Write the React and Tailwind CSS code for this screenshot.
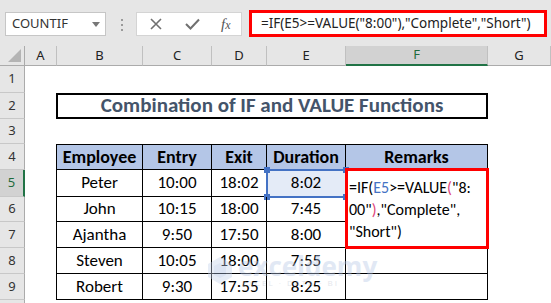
import React from 'react';

const cal = { fontFamily: 'Carlito, Lato, "Liberation Sans", sans-serif' };
const ui = { fontFamily: '"Noto Sans", "Open Sans", sans-serif' };

const cols = ['A', 'B', 'C', 'D', 'E', 'F', 'G'];
const rows = [
  ['Peter', '10:00', '18:02', '8:02'],
  ['John', '10:15', '18:00', '7:45'],
  ['Ajantha', '9:50', '17:50', '8:00'],
  ['Steven', '10:05', '18:00', '7:55'],
  ['Robert', '9:30', '17:55', '8:25'],
];
const rowHeights = ['h-[27px]', 'h-[26px]', 'h-[25px]', 'h-[26px]', 'h-[27px]', 'h-[25px]', 'h-[26px]', 'h-[26px]', 'h-[26px]', 'h-[26px]'];

function Toolbar() {
  return (
    <div className="h-[46px] bg-[#e6e6e6] flex items-start" style={ui}>
      <div className="ml-[5px] mt-[12px] w-[101px] h-[24px] bg-white border border-[#c6c6c6] flex items-center pl-[6px] pr-[5px]">
        <span className="text-[13px] text-[#333] flex-1">COUNTIF</span>
        <span className="w-0 h-0 border-l-[4px] border-r-[4px] border-t-[5px] border-l-transparent border-r-transparent border-t-[#777]" />
      </div>
      <div className="ml-[15px] mt-[19px] flex flex-col gap-[3px]">
        <span className="w-[2px] h-[2px] bg-[#9a9a9a]" />
        <span className="w-[2px] h-[2px] bg-[#9a9a9a]" />
        <span className="w-[2px] h-[2px] bg-[#9a9a9a]" />
      </div>
      <div className="ml-[13px] mt-[12px] w-[106px] h-[24px] bg-white border border-[#d4d4d4] flex items-center">
        <svg width="12" height="12" viewBox="0 0 12 12" className="ml-[13px]">
          <path d="M1 1 L11 11 M11 1 L1 11" stroke="#707070" strokeWidth="1.6" fill="none" />
        </svg>
        <svg width="15" height="12" viewBox="0 0 15 12" className="ml-[23px]">
          <path d="M1 6 L5.5 10.5 L14 1.5" stroke="#707070" strokeWidth="2" fill="none" />
        </svg>
        <span className="ml-[21px] text-[15px] italic text-[#555]" style={{ fontFamily: '"Liberation Serif", serif' }}>
          f<span className="text-[12px]">x</span>
        </span>
      </div>
      <div className="ml-[7px] mt-[10px] w-[298px] h-[27px] bg-white border-[3px] border-[#ff0000] flex items-center pl-[9px]">
        <span className="text-[13.5px] text-[#222] whitespace-nowrap">=IF(E5&gt;=VALUE("8:00"),"Complete","Short")</span>
      </div>
    </div>
  );
}

function Sheet() {
  return (
    <div className="grid grid-cols-[25px_32px_86px_69px_55px_79px_142px_63px]">
      {/* column headers */}
      <div className="h-[20px] bg-[#e6e6e6] border-b border-[#ababab] border-r border-r-[#ababab] relative">
        <svg width="13" height="13" viewBox="0 0 13 13" className="absolute right-[3px] bottom-[3px]">
          <path d="M13 0 L13 13 L0 13 Z" fill="#b4b4b4" />
        </svg>
      </div>
      {cols.map((c) => (
        <div
          key={c}
          className={`h-[20px] flex items-center justify-center text-[13px] border-r border-[#c0c0c0] ${
            c === 'F' ? 'bg-[#d2d2d2] text-[#1e6b3c] border-b-2 border-b-[#217346]' : 'bg-[#e6e6e6] text-[#222] border-b border-b-[#ababab]'
          }`}
          style={ui}
        >
          {c}
        </div>
      ))}

      {rowHeights.map((h, i) => {
        const n = i + 1;
        return (
          <React.Fragment key={n}>
            <div
              className={`${h} flex items-center justify-center text-[13px] border-b border-[#c8c8c8] ${
                n === 5 ? 'bg-[#d2d2d2] text-[#1e6b3c] border-r-2 border-r-[#217346]' : 'bg-[#e6e6e6] text-[#333] border-r border-r-[#ababab]'
              }`}
              style={ui}
            >
              {n < 10 ? n : ''}
            </div>
            <div className={h} />
            {n === 2 ? (
              <div className={`${h} col-span-5 border-2 border-black -ml-px flex items-center justify-center`}>
                <span className="text-[21px] font-bold text-[#44546a]" style={cal}>
                  Combination of IF and VALUE Functions
                </span>
              </div>
            ) : n === 4 ? (
              <HeaderRow h={h} />
            ) : n >= 5 && n <= 9 ? (
              <DataRow h={h} r={rows[n - 5]} n={n} />
            ) : (
              <div className={`${h} col-span-5`} />
            )}
            <div className={h} />
          </React.Fragment>
        );
      })}
    </div>
  );
}

function HeaderRow({ h }) {
  const labels = ['Employee', 'Entry', 'Exit', 'Duration', 'Remarks'];
  return (
    <>
      {labels.map((l, i) => (
        <div
          key={l}
          className={`${h} bg-[#b4c6e7] border-t border-b border-r border-black ${i === 0 ? 'border-l -ml-px' : ''} flex items-center justify-center text-[18px] font-bold text-black`}
          style={cal}
        >
          {l}
        </div>
      ))}
    </>
  );
}

function DataRow({ h, r, n }) {
  return (
    <>
      {r.map((v, i) => (
        <div
          key={i}
          className={`${h} relative border-b border-r border-black ${i === 0 ? 'border-l -ml-px' : ''} ${
            n === 5 && i === 3 ? 'bg-[#e4ebf7]' : ''
          } flex items-center justify-center text-[17px] text-black`}
          style={cal}
        >
          {v}
          {n === 5 && i === 3 && (
            <div className="absolute -left-px -top-px -right-[2px] -bottom-[2px] border-2 border-[#4472c4]">
              <span className="absolute -left-[4px] -top-[4px] w-[6px] h-[6px] bg-[#4472c4]" />
              <span className="absolute -right-[4px] -top-[4px] w-[6px] h-[6px] bg-[#4472c4]" />
              <span className="absolute -left-[4px] -bottom-[4px] w-[6px] h-[6px] bg-[#4472c4]" />
              <span className="absolute -right-[4px] -bottom-[4px] w-[6px] h-[6px] bg-[#4472c4]" />
            </div>
          )}
        </div>
      ))}
      <div className={`${h} border-b border-r border-black`} />
    </>
  );
}

function EditBox() {
  return (
    <div className="absolute left-[345px] top-[168px] w-[144px] h-[81px] bg-white border-[3px] border-[#ff0000] pl-px pt-[6px] text-[16px] leading-[22px] text-black overflow-hidden" style={cal}>
      <div className="whitespace-nowrap">
        =IF(<span className="text-[#4472c4]">E5</span>&gt;=VALUE<span className="text-[#e0457b]">(</span>"8:
      </div>
      <div className="whitespace-nowrap">
        00"<span className="text-[#e0457b]">)</span>,"Complete",
      </div>
      <div className="whitespace-nowrap">"Short")</div>
    </div>
  );
}

function Watermark() {
  return (
    <div className="absolute left-[205px] top-[253px] flex items-center gap-[3px] opacity-40 pointer-events-none">
      <svg width="30" height="30" viewBox="0 0 30 30">
        <path d="M15 2 L27 9 L27 22 L15 29 L3 22 L3 9 Z" fill="#c5d3ec" />
        <path d="M9 11 L15 8 L21 11 L21 20 L15 23 L9 20 Z" fill="#a9bde2" />
      </svg>
      <div className="flex flex-col leading-none">
        <span className="text-[26px] font-bold text-[#b5c6e6]" style={{ fontFamily: '"Open Sans", sans-serif' }}>exceldemy</span>
        <span className="text-[8px] tracking-[2px] text-[#b9c2d0] ml-[4px]" style={{ fontFamily: '"Open Sans", sans-serif' }}>EXCEL · DATA · BI</span>
      </div>
    </div>
  );
}

export default function App() {
  return (
    <div className="w-[551px] h-[303px] overflow-hidden bg-white relative">
      <Toolbar />
      <Sheet />
      <Watermark />
      <EditBox />
    </div>
  );
}
